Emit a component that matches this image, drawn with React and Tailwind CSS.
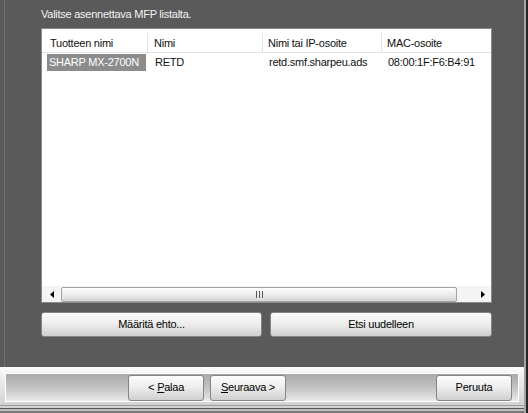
import React from 'react'

const COLS = [
  { head: 'Tuotteen nimi', w: 'w-[106px]', hp: 'pl-[8px]' },
  { head: 'Nimi', w: 'w-[115px]', hp: 'pl-[6px]' },
  { head: 'Nimi tai IP-osoite', w: 'w-[119px]', hp: 'pl-[5px]' },
  { head: 'MAC-osoite', w: 'flex-1', hp: 'pl-[5px]' },
]

function WinButton({ children, className = '' }) {
  return (
    <div
      className={
        'flex items-center justify-center rounded-[3px] border border-[#858585] bg-gradient-to-b from-[#fdfdfd] via-[#ececec] to-[#cfcfcf] text-black ' +
        className
      }
    >
      {children}
    </div>
  )
}

function Arrow({ dir }) {
  return (
    <svg width="4" height="7" viewBox="0 0 4 7">
      {dir === 'left'
        ? <path d="M4 0 L0 3.5 L4 7 Z" fill="#000" />
        : <path d="M0 0 L4 3.5 L0 7 Z" fill="#000" />}
    </svg>
  )
}

export default function App() {
  return (
    <div className="w-[528px] h-[413px] flex bg-[#5a5a5a] font-['Liberation_Sans',Arial,sans-serif] text-[11px] leading-[13px] tracking-[-0.25px] overflow-hidden">
      <div className="w-[524px] flex flex-col">
        {/* Main area */}
        <div className="flex-1 flex">
          <div className="w-[4px]" />
          <div className="w-[1px] bg-[#6e6e6e]" />
          <div className="flex-1 flex flex-col pl-[36px] pt-[8px]">
            <p className="text-[#f2f2f2]">Valitse asennettava MFP listalta.</p>

            {/* List view */}
            <div className="mt-[7px] w-[451px] h-[275px] border border-[#8a8a8a] bg-white flex flex-col text-[#111]">
              <div className="h-[23px] flex">
                {COLS.map((c, i) => (
                  <div key={c.head} className={'flex ' + c.w}>
                    <div className={'flex-1 pt-[8px] ' + c.hp}>{c.head}</div>
                    {i < 3 && <div className="w-[1px] h-[19px] self-end bg-[#e3e3e3]" />}
                  </div>
                ))}
              </div>
              <div className="h-[1px] bg-[#e3e3e3]" />

              <div className="mt-[1px] h-[17px] flex leading-[17px]">
                <div className="w-[106px] pl-[5px]">
                  <div className="w-[99px] bg-[#8c8c8c] text-white pl-[2px] whitespace-nowrap">SHARP MX-2700N</div>
                </div>
                <div className="w-[115px] pl-[7px]">RETD</div>
                <div className="w-[119px] pl-[6px]">retd.smf.sharpeu.ads</div>
                <div className="flex-1 pl-[6px]">08:00:1F:F6:B4:91</div>
              </div>

              <div className="flex-1" />

              {/* Horizontal scrollbar */}
              <div className="h-[16px] flex items-center bg-[#f4f4f4]">
                <div className="w-[19px] h-full flex items-center justify-center">
                  <Arrow dir="left" />
                </div>
                <div className="w-[396px] h-[15px] rounded-[2px] border border-[#a3a3a3] bg-gradient-to-b from-[#fefefe] via-[#ececec] to-[#d6d6d6] flex items-center justify-center gap-[2px]">
                  <div className="w-[1px] h-[7px] bg-[#555]" />
                  <div className="w-[1px] h-[7px] bg-[#555]" />
                  <div className="w-[1px] h-[7px] bg-[#555]" />
                </div>
                <div className="flex-1" />
                <div className="w-[17px] h-full flex items-center justify-center">
                  <Arrow dir="right" />
                </div>
              </div>
            </div>

            <div className="mt-[9px] flex gap-[8px] w-[451px]">
              <WinButton className="w-[221px] h-[25px]">Määritä ehto...</WinButton>
              <WinButton className="w-[222px] h-[25px]">Etsi uudelleen</WinButton>
            </div>
          </div>
        </div>

        {/* Wizard button bar */}
        <div className="h-[46px] flex flex-col bg-gradient-to-b from-[#fbfbfb] via-[#e2e2e2] to-[#c9c9c9]">
          <div className="h-[6px]" />
          <div className="mx-[5px] h-[29px] border border-white bg-gradient-to-b from-[#a9a9a9] via-[#c3c3c3] to-[#e9e9e9] flex items-center pl-[122px] pr-[6px]">
            <WinButton className="w-[76px] h-[26px]">&lt; <span className="underline ml-[3px]">P</span>alaa</WinButton>
            <WinButton className="w-[76px] h-[26px] ml-[6px]"><span className="underline">S</span>euraava &gt;</WinButton>
            <div className="flex-1" />
            <WinButton className="w-[76px] h-[26px]">Peruuta</WinButton>
          </div>
          <div className="flex-1" />
          <div className="h-[1px] bg-[#9c9c9c]" />
          <div className="h-[2px] bg-[#d2d2d2]" />
          <div className="h-[1px] bg-[#555555]" />
          <div className="h-[2px] bg-[#bdbdbd]" />
          <div className="h-[2px] bg-[#7a7a7a]" />
        </div>
      </div>
      <div className="w-[2px] bg-[#a3a3a3]" />
      <div className="w-[2px] bg-[#262626]" />
    </div>
  )
}
